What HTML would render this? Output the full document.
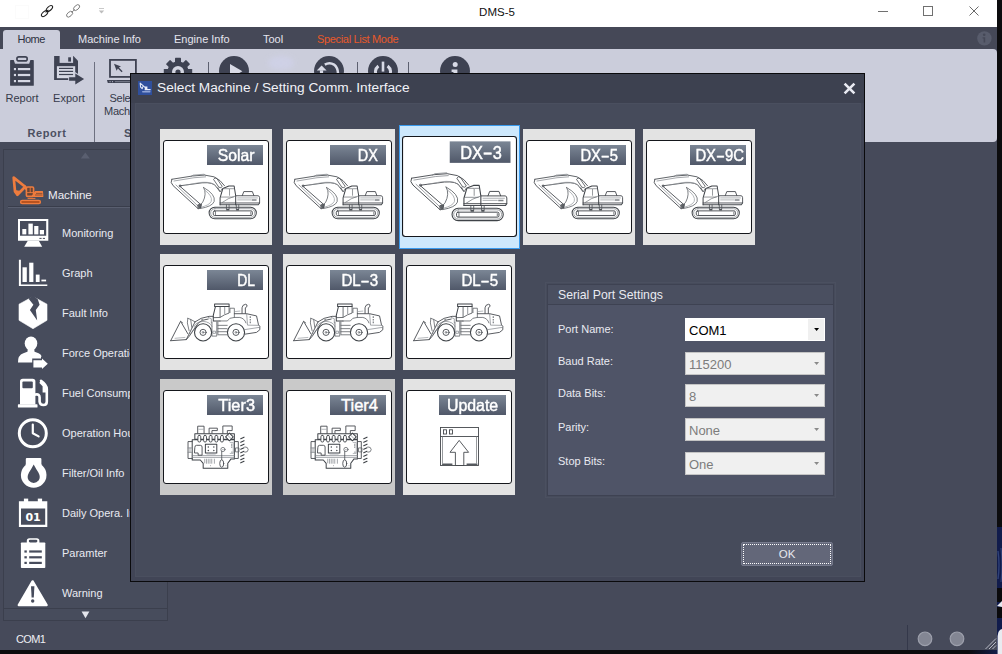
<!DOCTYPE html>
<html>
<head>
<meta charset="utf-8">
<title>DMS-5</title>
<style>
*{box-sizing:border-box;margin:0;padding:0}
html,body{width:1002px;height:654px;overflow:hidden;background:#0b0b0d}
body{font-family:"Liberation Sans",sans-serif;font-size:11px;color:#e8e9f0;position:relative}
.abs{position:absolute}
svg{display:block}
#win{position:absolute;left:0;top:0;width:997px;height:650px;background:#464a5a;overflow:hidden}
#titlebar{position:absolute;left:0;top:0;width:997px;height:27px;background:#fff}
#title{position:absolute;left:0;width:994px;top:5px;text-align:center;color:#111;font-size:11.5px;line-height:14px}
#tabrow{position:absolute;left:0;top:27px;width:997px;height:22px;background:#454857}
.tab{position:absolute;top:6px;font-size:11px;line-height:13px;color:#e4e5ee;white-space:nowrap}
#hometab{position:absolute;left:3px;top:3px;width:57px;height:20px;background:#cbcddb;border-radius:3px 3px 0 0}
#ribbon{position:absolute;left:0;top:49px;width:997px;height:93px;background:#cbcddb;border-radius:0 4px 4px 0}
.rlabel{position:absolute;color:#363a4a;font-size:11px;line-height:13px;text-align:center;white-space:nowrap}
.rsep{position:absolute;width:1px;background:#6d7080}
#side{position:absolute;left:3px;top:149px;width:165px;height:472px;background:#474c5c;border:1px solid #3b3f4d}
.sitem{position:absolute;left:57px;font-size:11px;line-height:13px;color:#e9eaf1;white-space:nowrap}
.sicon{position:absolute;left:0;top:0}
#dlg{position:absolute;left:130px;top:73px;width:735px;height:509px;background:linear-gradient(#3d4150 0,#3d4150 29px,#414556 29px);border:1px solid #0a0a0c}
#dlgbody{position:absolute;left:135px;top:103px;width:726px;height:474px;background:#464b5b;border:1px solid #4a4f5f}
#dlgtitle{position:absolute;left:157px;top:80px;font-size:13.7px;line-height:16px;color:#f1f2f8;white-space:nowrap}
.tile{position:absolute;width:112px;height:116px;background:#e3e3e3}
.tile.dk{background:#c9c9c9}
.tile .in{position:absolute;left:3px;top:11px;width:106px;height:94px;background:#fff;border:1px solid #15171c;border-radius:3px;overflow:hidden}
.tile.sel{width:121px;height:124px;background:#cde8fc;border:1px solid #3a9bee}
.tile.sel .in{left:2px;top:10px;transform-origin:0 0;transform:scale(1.085,1.0745)}
.tile .lb{position:absolute;right:5px;top:4px;width:56px;height:20px;background:linear-gradient(#7b8695,#505869);color:#fff;font-weight:normal;-webkit-text-stroke:0.45px #fff;font-size:16.5px;line-height:21px;text-align:right;padding-right:8px;white-space:nowrap}
.tile .lb span{display:inline-block;transform-origin:100% 50%;transform:scaleX(.88)}
.tile svg{position:absolute;left:-1px;top:-1px}
.tile .lb span.hy{display:inline-block;transform-origin:50% 50%;transform:scaleX(1.8);margin:0 2.2px}
#panel{position:absolute;left:547px;top:284px;width:287px;height:212px;background:#4f5467;border:1px solid #3e4252;outline:1px solid #4b5060;outline-offset:1px}
#panelhd{position:absolute;left:0;top:0;width:285px;height:20px;background:#4a4f60;border-bottom:1px solid #3e4252}
.plabel{position:absolute;left:558px;font-size:11px;line-height:13px;color:#e9eaf1;white-space:nowrap}
.combo{position:absolute;left:685px;width:140px;height:23px;background:#f0f0f0;border:1px solid #c4c4c4;color:#7c7c7c;font-size:13px;line-height:23px;padding-left:3px}
.combo.on{background:#fff;border-color:#fff;color:#000}
.combo i{position:absolute;right:4.7px;top:8.7px;width:5.4px;height:3.2px;background:#8a8a8a;clip-path:polygon(0 0,100% 0,50% 100%)}
.combo.on b{position:absolute;right:0;top:0;width:16px;height:21px;background:#f0f0f0}
.combo.on i{background:#000}
#ok{position:absolute;left:741px;top:542px;width:92px;height:24px;background:#636779;border:1px solid #777b8d;border-radius:2px;color:#e6e7ee;font-size:11.5px;line-height:22px;text-align:center}
#ok:after{content:"";position:absolute;left:1px;top:1px;right:1px;bottom:1px;border:1px dotted #fff}
</style>
</head>
<body>
<div id="win">
  <div id="titlebar"><div id="title">DMS-5</div>
  <svg class="abs" style="left:0;top:0" width="997" height="27" viewBox="0 0 997 27" fill="none">
<rect x="15.5" y="5.5" width="13" height="13" stroke="#fbfbfb"/>
<g stroke="#1c1c1c" stroke-width="1.05">
<ellipse cx="44.4" cy="13.6" rx="3.8" ry="2" transform="rotate(-42 44.6 13.4)"/>
<ellipse cx="49.6" cy="8.6" rx="3.8" ry="2" transform="rotate(-42 49.4 8.8)"/>
<path d="M45.6,12.4 L48.4,9.8"/>
</g>
<g stroke="#7a7a7a" stroke-width="0.9">
<ellipse cx="69.6" cy="14.2" rx="3.6" ry="2.1" transform="rotate(-42 69.6 14.2)"/>
<ellipse cx="76.6" cy="7.6" rx="3.6" ry="2.1" transform="rotate(-42 76.6 7.6)"/>
<path d="M71.6,12.4 L74.6,9.6"/>
</g>
<path d="M99,8.5 L104,8.5" stroke="#c9c9c9"/>
<path d="M98.8,10.5 L104.2,10.5 L101.5,13.5 Z" fill="#bdbdbd"/>
<path d="M878,11.5 L888,11.5" stroke="#707070"/>
<rect x="923.5" y="6.5" width="9" height="9" stroke="#707070"/>
<path d="M969.5,6.5 L978.5,15.5 M978.5,6.5 L969.5,15.5" stroke="#6a6a6a" stroke-width="1"/>
</svg>
  </div>
  <div id="tabrow">
    <div id="hometab"></div>
    <div class="tab" style="left:17.5px;color:#2c3040;letter-spacing:-0.5px">Home</div>
    <div class="tab" style="left:78px">Machine Info</div>
    <div class="tab" style="left:174px">Engine Info</div>
    <div class="tab" style="left:263px">Tool</div>
    <div class="tab" style="left:317px;color:#e8592a;letter-spacing:-0.33px">Special List Mode</div>
    <svg class="abs" style="left:976px;top:3px" width="17" height="17" viewBox="0 0 17 17"><circle cx="8.4" cy="8.4" r="7.2" fill="#585c6c"/><circle cx="8.2" cy="4.8" r="1.3" fill="#454857"/><path d="M6.6,7.2 L9.2,7.2 L9.2,12.4 L7.6,12.4 L7.6,8.4 L6.6,8.4 Z" fill="#454857"/></svg>
  </div>
  <div id="ribbon"></div>
  <div class="abs" style="left:0;top:49px"><svg width="500" height="93" viewBox="0 49 500 93" fill="none">
<rect x="10.1" y="60.1" width="23.7" height="25.7" rx="0.6" fill="#3e4252"/>
<path d="M13.6,59.6 L30.5,59.6 L29.2,63.8 L15,63.8 Z" fill="#cbcddb"/>
<rect x="16.1" y="56.1" width="11.9" height="5.6" rx="2.8" fill="#3e4252"/>
<rect x="17.7" y="57.7" width="8.7" height="2.4" rx="1.2" fill="#cbcddb"/>
<g fill="#d6d8e4">
<rect x="13.9" y="68" width="2.1" height="2.2"/><rect x="17.9" y="68" width="12.3" height="2.2"/>
<rect x="13.9" y="73.9" width="2.1" height="2.2"/><rect x="17.9" y="73.9" width="12.3" height="2.2"/>
<rect x="13.9" y="80" width="2.1" height="2.2"/><rect x="17.9" y="80" width="12.3" height="2.2"/>
</g>
<path d="M54.1,56.1 L73.4,56.1 L78,60.7 L78,80 L54.1,80 Z" fill="#3e4252"/>
<rect x="59.6" y="55.6" width="13.5" height="7.3" fill="#cbcddb"/>
<rect x="68.2" y="57.3" width="2.8" height="4.3" fill="#3e4252"/>
<rect x="56.9" y="66.2" width="18.3" height="12" fill="#d6d8e4"/>
<g fill="#3e4252">
<rect x="59" y="67.8" width="14.1" height="1.2"/>
<rect x="59" y="70.8" width="14.1" height="1.2"/>
<rect x="59" y="73.9" width="14.1" height="1.2"/>
</g>
<path d="M68.2,76.2 L74.2,76.2 L74.2,71.6 L86,79 L74.2,86.4 L74.2,81.6 L68.2,81.6 Z" fill="#cbcddb"/>
<path d="M69.1,77.2 L75.3,77.2 L75.3,73.6 L84.1,79 L75.3,84.4 L75.3,80.7 L69.1,80.7 Z" fill="#3e4252"/>
<rect x="110" y="59.9" width="25.9" height="17" stroke="#3e4252" stroke-width="1.8"/>
<path d="M107,80 L139.4,80 L138.6,82.9 L107.8,82.9 Z" fill="#3e4252"/>
<path d="M109.6,81.7 L110.6,81.7 M112,81.7 L113,81.7" stroke="#cbcddb" stroke-width="0.9"/>
<path d="M115,81.7 L130.6,81.7" stroke="#9a9dac" stroke-width="0.7"/>
<path d="M114,63.8 L121,66.4 L118.9,67.6 L122.6,71.2 L121.6,72.2 L117.9,68.6 L116.6,70.8 Z" fill="#3e4252"/>
<g transform="translate(178,72)" fill="#3e4252">
<circle r="10.6"/>
<g>
<rect x="-3" y="-14.2" width="6" height="28.4" rx="0.6"/>
<rect x="-3" y="-14.2" width="6" height="28.4" rx="0.6" transform="rotate(45)"/>
<rect x="-3" y="-14.2" width="6" height="28.4" rx="0.6" transform="rotate(90)"/>
<rect x="-3" y="-14.2" width="6" height="28.4" rx="0.6" transform="rotate(135)"/>
</g>
<circle r="6" fill="#d4d6e2"/>
<circle r="2.6"/>
</g>
<g fill="#5d6070">
<rect x="208" y="62" width="1" height="20"/>
<rect x="357" y="62" width="1" height="20"/>
<rect x="408" y="62" width="1" height="20"/>
</g>
<circle cx="234" cy="71" r="15" fill="#3e4252"/>
<path d="M230,64 L242.4,71.2 L230,78.4 Z" fill="#d8dae6"/>
<ellipse cx="281" cy="63" rx="13" ry="7" fill="#d2d4ef" opacity="0.55" filter="url(#bl)"/>
<filter id="bl" x="-50%" y="-50%" width="200%" height="200%"><feGaussianBlur stdDeviation="2.5"/></filter>
<circle cx="329" cy="71" r="15" fill="#3e4252"/>
<path d="M324.8,64.6 Q329.6,61.8 334,64.6 Q337.8,67.6 338,73.4" stroke="#d8dae6" stroke-width="2.5"/>
<path d="M316.8,70.5 L321.6,65.4 L326.6,70.5 Z" fill="#d8dae6"/>
<rect x="319.9" y="70.3" width="3.2" height="3" fill="#d8dae6"/>
<circle cx="383" cy="71" r="15" fill="#3e4252"/>
<path d="M378.4,66 A7.6,7.6 0 1 0 387.6,66" stroke="#d8dae6" stroke-width="3"/>
<path d="M383,61.6 L383,71.6" stroke="#d8dae6" stroke-width="2.6"/>
<circle cx="455" cy="71" r="15" fill="#3e4252"/>
<circle cx="455.2" cy="64.4" r="2.5" fill="#d8dae6"/>
<path d="M451.6,69.6 L457.4,69.6 L457.4,79 L453.4,79 L453.4,72 L451.6,72 Z" fill="#d8dae6"/>
</svg></div>
  <div class="rlabel" style="left:2px;width:40px;top:92px">Report</div>
  <div class="rlabel" style="left:49px;width:40px;top:92px">Export</div>
  <div class="rlabel" style="left:99px;width:50px;top:92px;letter-spacing:-0.25px">Select<br>Machine</div>
  <div class="rlabel" style="left:22px;width:50px;top:127px;font-weight:bold;color:#4c5062;letter-spacing:0.6px">Report</div>
  <div class="rlabel" style="left:124px;width:20px;top:127px;font-weight:bold;color:#4c5062;text-align:left">S</div>
  <div class="rsep" style="left:94px;top:62px;height:80px"></div>
  <div id="side"><div class="abs" style="left:1px;top:0;width:162px;height:470px">
    <div class="abs" style="left:-1px;top:458px;width:163px;height:12px;border-top:1px solid #3b3f4d;background:#474c5c"></div>
    <div class="sicon"><svg width="162" height="470" viewBox="5 150 162 470" fill="none">
<path d="M80.8,158.6 L85.3,152.6 L89.8,158.6 Z" fill="#5a5f70"/>
<g stroke="#ee7c3e" stroke-linejoin="round" stroke-linecap="round">
<path d="M13.7,177.6 L25.2,186.8 L17.4,194.8 L15,191.4 Z" stroke-width="2.7"/>
<path d="M15,190.6 L20.4,191.4 L17.4,195 Z" stroke-width="1" fill="#ee7c3e"/>
<path d="M25.2,186.6 L26,189" stroke-width="2"/>
<rect x="26.4" y="187" width="7.2" height="9.4" rx="1.2" stroke-width="1.6" fill="#6a4434"/>
<path d="M30.2,187.6 L30.2,192.6 M27,192.6 L33,192.6" stroke-width="0.9"/>
<path d="M32.2,196.4 L35.4,191.6 L42.4,191.6 L42.8,196.4 Z" stroke-width="1.2" fill="#ee7c3e"/>
<path d="M36.4,193.4 L42,193.4 M35.4,195 L42,195" stroke="#6a4434" stroke-width="0.7"/>
<path d="M28,198.4 L35,198.4" stroke-width="1"/>
<rect x="20.6" y="200.4" width="19.8" height="3.2" rx="1.6" stroke-width="1.4" fill="#b9531f"/>
</g>
<g fill="#fff">
<path d="M18,219 L48.3,219 L48.3,240.8 L18,240.8 Z M20,221 L20,235.8 L46.2,235.8 L46.2,221 Z" fill-rule="evenodd"/>
<rect x="22.3" y="229" width="4" height="5.4"/>
<rect x="28.4" y="223.6" width="4.4" height="10.8"/>
<rect x="34.2" y="226" width="4.2" height="8.4"/>
<rect x="39.8" y="230" width="4.2" height="4.4"/>
<path d="M27.8,240.8 L38.8,240.8 L42.2,246.8 L24.2,246.8 Z"/>
</g>
<path d="M39.4,238.4 L41.6,238.4 M42.8,238.4 L45,238.4" stroke="#474c5c" stroke-width="1"/>
<g fill="#fff">
<path d="M18.9,259.7 L20.9,259.7 L20.9,284.4 L47.3,284.4 L47.3,286.1 L18.9,286.1 Z"/>
<rect x="22.5" y="267.3" width="4.3" height="14.7"/>
<rect x="29.2" y="262.7" width="4.2" height="19.3"/>
<rect x="35.8" y="274.6" width="3.8" height="7.4"/>
<rect x="41.4" y="279.6" width="4.7" height="1.8"/>
</g>
<path d="M33,296.6 L47,304.2 L47,320.3 L33,328.7 L19,320.3 L19,304.2 Z" fill="#fff" stroke="#fff" stroke-width="0.6" stroke-linejoin="round"/>
<path d="M28.6,298.8 L33.4,304.8 L29.9,309.9 L37.2,320.6 L35.8,309.9 L39.6,304.8 L37.9,299.4 L33,295 Z" fill="#474c5c"/>
<g fill="#fff">
<ellipse cx="31" cy="343.4" rx="6.3" ry="6.9"/>
<rect x="27.6" y="347" width="6.8" height="7"/>
<path d="M18,362.6 Q17.6,355.2 23.4,353.2 L28,351.4 Q31,353.6 34,351.4 L38.6,353.2 Q43,355 42.6,362.6 Z"/>
</g>
<path d="M32.2,358.6 L41,358.6 L41,356 L49.6,363.8 L41,371.6 L41,369 L32.2,369 Z" fill="#474c5c"/>
<path d="M33.4,360.2 L42,360.2 L42,358.6 L47.8,363.8 L42,369 L42,367.6 L33.4,367.6 Z" fill="#fff"/>
<g fill="#fff">
<path d="M20,381.6 Q20,378.8 22.8,378.8 L32.6,378.8 Q35.4,378.8 35.4,381.6 L35.4,404.5 L20,404.5 Z"/>
<rect x="17.9" y="404.3" width="19.6" height="3.2" rx="0.6"/>
</g>
<rect x="22.4" y="381.4" width="10.4" height="6.8" rx="1" fill="#474c5c"/>
<path d="M35.4,394.6 Q39.6,393.6 39.6,397.4 L39.6,401.6 Q40,405 43.4,405 Q46.8,405 46.8,401.4 L46.8,389 Q46.6,384.8 41,380.8" stroke="#fff" stroke-width="2.6" stroke-linecap="round"/>
<path d="M40.6,380.6 L46.4,386.4 L46.4,392.6 L42.6,392.6 L42.6,386.2 L39.4,383 Z" fill="#fff"/>
<circle cx="32.8" cy="433.3" r="13.5" stroke="#fff" stroke-width="3"/>
<path d="M32.8,424.6 L32.8,433.3 L38.6,436.4" stroke="#fff" stroke-width="2.2" stroke-linecap="round" stroke-linejoin="round"/>
<g fill="#fff">
<rect x="25.8" y="457.9" width="15.6" height="8" rx="1"/>
<circle cx="33.7" cy="475" r="12.8"/>
</g>
<path d="M33.7,464.6 Q36,469 38.4,472.6 Q41,477.4 38.6,480.6 Q36.6,483 33.7,483 Q30.8,483 28.8,480.6 Q26.4,477.4 29,472.6 Q31.4,469 33.7,464.6 Z" fill="#474c5c"/>
<g fill="#fff">
<path d="M18.9,501.3 L47.3,501.3 L47.3,526.9 L18.9,526.9 Z M21,508.6 L21,524.8 L45.2,524.8 L45.2,508.6 Z" fill-rule="evenodd"/>
<rect x="23.9" y="498.6" width="4.3" height="4"/>
<rect x="37.8" y="498.6" width="4.3" height="4"/>
</g>
<text x="33.1" y="521.4" style="font-family:'DejaVu Sans','Liberation Sans',sans-serif;font-weight:bold;font-size:11px" fill="#fff" text-anchor="middle">01</text>
<g fill="#fff">
<rect x="20.9" y="542.4" width="24.4" height="25.6" rx="0.8"/>
<rect x="26.8" y="538.2" width="12.6" height="6.6" rx="2.6"/>
</g>
<rect x="28.8" y="539.8" width="8.6" height="2.6" rx="1.3" fill="#474c5c"/>
<g fill="#474c5c">
<rect x="24.4" y="550.4" width="2.4" height="2.2"/><rect x="29.2" y="550.4" width="12.6" height="2.2"/>
<rect x="24.4" y="556.2" width="2.4" height="2.2"/><rect x="29.2" y="556.2" width="12.6" height="2.2"/>
<rect x="24.4" y="561.8" width="2.4" height="2.2"/><rect x="29.2" y="561.8" width="12.6" height="2.2"/>
</g>
<path d="M32.6,581.4 L46.6,605 L18.8,605 Z" fill="#fff" stroke="#fff" stroke-width="2.4" stroke-linejoin="round"/>
<path d="M31,586.2 L34.4,586.2 L33.8,597.6 L31.6,597.6 Z" fill="#474c5c"/>
<circle cx="32.7" cy="601" r="1.7" fill="#474c5c"/>
<path d="M81.6,611.4 L89.4,611.4 L85.5,618.2 Z" fill="#e4e5ec"/>
</svg></div>
    <div class="abs" style="left:43px;top:37px;font-size:11.6px;line-height:15px;color:#eeeef4">Machine</div>
    <div class="abs" style="left:3px;top:56px;width:159px;height:2px;background:#595e6f;border-top:1px solid #393d4b"></div>
    <div class="sitem" style="top:77px">Monitoring</div>
    <div class="sitem" style="top:117px">Graph</div>
    <div class="sitem" style="top:157px">Fault Info</div>
    <div class="sitem" style="top:197px">Force Operation</div>
    <div class="sitem" style="top:237px">Fuel Consumption</div>
    <div class="sitem" style="top:277px">Operation Hour</div>
    <div class="sitem" style="top:317px">Filter/Oil Info</div>
    <div class="sitem" style="top:357px">Daily Opera. Info</div>
    <div class="sitem" style="top:397px">Paramter</div>
    <div class="sitem" style="top:437px">Warning</div>
  </div></div>
  <div class="abs" style="left:16px;top:633px;font-size:11px;line-height:13px;color:#eeeef4;letter-spacing:-0.6px">COM1</div>
  <div class="abs" style="left:900px;top:620px"><svg width="97" height="30" viewBox="900 620 97 30" fill="none">
<rect x="907" y="625" width="1" height="25" fill="#34384a"/>
<circle cx="925" cy="638.8" r="6.8" fill="#838693" stroke="#9da0ac" stroke-width="1.2"/>
<circle cx="957" cy="638.8" r="6.8" fill="#838693" stroke="#9da0ac" stroke-width="1.2"/>
<path d="M985.5,649 L996,638.5 M989,649 L996,642 M992.5,649 L996,645.5" stroke="#b9bbc6" stroke-width="1"/>
</svg></div>
</div>
<div class="abs" style="left:997px;top:0"><svg width="5" height="654" viewBox="997 0 5 654" fill="none">
<rect x="997" y="0" width="5" height="654" fill="#0c0c0e"/>
<rect x="997" y="527" width="5" height="127" fill="#111c4c"/>
<path d="M998,551 Q1000,565 998,579" stroke="#2f4178" stroke-width="1.4"/>
<path d="M1001,548 Q1003,565 1001,582" stroke="#2f4178" stroke-width="1.2"/>
<rect x="997" y="588" width="5" height="14" fill="#0a0a0c"/>
<path d="M997,606 L1002,601 L1002,607 Z" fill="#e6e8ee"/>
<rect x="997" y="607" width="5" height="11" fill="#0a0a0c"/>
<path d="M997.6,654 L997.6,636 Q998,630 1002,629 L1002,654 Z" fill="#e9ebf0"/>
</svg></div>
<div class="abs" style="left:968px;top:650px;width:29px;height:4px;background:linear-gradient(90deg,#0b0b0d,#121d48)"></div>
<div id="dlg"></div>
<div id="dlgbody"></div>
<div class="abs" style="left:138px;top:81px"><svg width="14" height="14" viewBox="0 0 14 14" fill="none">
<rect width="14" height="14" fill="#2f4f9c"/>
<path d="M2.2,2.2 L7,6.4 M2.2,2.2 L2.6,6 L4.2,7.6 L5,5.4" stroke="#dfe6f6" stroke-width="1.1" stroke-linecap="round" stroke-linejoin="round"/>
<path d="M7,5.4 L9.4,5.4 L9.4,8 L12.6,8 L12.6,9.2 L6.6,9.2 Z" fill="#e8ecf8"/>
<path d="M4.8,10.8 L11.8,10.8" stroke="#8fa3d6" stroke-width="1.6" stroke-linecap="round"/>
</svg></div>
<div id="dlgtitle">Select Machine / Setting Comm. Interface</div>
<div class="abs" style="left:843px;top:82px"><svg width="13" height="13" viewBox="0 0 13 13" fill="none">
<path d="M1.6,1.6 L11.4,11.4 M11.4,1.6 L1.6,11.4" stroke="#e9eaf2" stroke-width="2.6" stroke-linecap="butt"/>
</svg></div>
<div class="tile" style="left:160px;top:129px"><div class="in"><svg width="106" height="94" viewBox="0 0 106 94" fill="none" stroke="#4f5358" stroke-linecap="round" stroke-linejoin="round">
<g transform="translate(0,25) scale(0.10978)" stroke-width="8.2">
<rect x="420" y="385" width="430" height="105" rx="52" stroke="#3f4348" stroke-width="9.2"/>
<rect x="434" y="398" width="402" height="79" rx="39" stroke="#7b7f84" stroke-width="6.2"/>
<rect x="458" y="418" width="356" height="42" rx="12" stroke="#3f4348" stroke-width="8.2"/>
<path d="M478,422 L478,456 M800,430 L800,450" stroke="#5c6065" stroke-width="7.2"/>
<path d="M578,364 L578,400 M602,364 L602,400 M668,364 L668,400 M690,364 L690,400" stroke-width="7.2"/>
<path d="M576,400 L604,400 L604,414 L576,414 Z M666,400 L692,400 L692,414 L666,414 Z" fill="#4f5358" stroke="none"/>
<path d="M662,280 L866,280 Q880,282 880,298 L880,346 L520,346" stroke="#474b50"/>
<path d="M520,362 L868,362 L880,346" stroke="#474b50" stroke-width="9.2"/>
<path d="M680,300 L860,300 M680,318 L800,318" stroke="#9da1a6" stroke-width="7.2"/>
<path d="M808,312 L852,312 L852,326 L808,326 Z" fill="#7f8388" stroke="none"/>
<path d="M722,279 L736,242 L814,242 L828,279" stroke="#474b50"/>
<path d="M520,362 L520,300 L545,214 L600,191 L648,191 L662,280 L662,362" stroke="#3f4348" stroke-width="9.2"/>
<path d="M547,216 L606,216 L606,276 M612,216 L646,216 M528,292 L640,292" stroke="#696d72" stroke-width="6.2"/>
<path d="M538,342 Q590,302 660,282" stroke="#696d72" stroke-width="6.2"/>
<path d="M80,130 L270,100 L380,92 L465,108 Q525,135 560,188" />
<path d="M100,146 L282,116 L388,108" stroke="#7b7f84" stroke-width="6.2"/>
<path d="M255,104 L275,92 L375,84 L385,92" stroke="#7b7f84" stroke-width="6.2"/>
<path d="M150,190 L300,170 Q420,148 470,180 L516,238" />
<path d="M215,182 L330,160 Q420,148 462,176" stroke="#94989d" stroke-width="5.2"/>
<path d="M462,128 Q474,108 490,122 L540,196 Q530,214 512,204 Z" stroke="#474b50" stroke-width="7.2"/>
<path d="M500,206 L520,246 L540,214" stroke="#5c6065" stroke-width="7.2"/>
<path d="M80,130 Q62,160 92,188 L318,396" stroke="#474b50"/>
<path d="M150,190 L346,362" stroke="#474b50"/>
<path d="M118,182 L330,384" stroke="#7b7f84" stroke-width="6.2"/>
<circle cx="156" cy="190" r="9" stroke-width="6.2"/>
<path d="M320,362 L350,356 L346,392 L322,398 Z" fill="#5c6065" stroke="#3f4348" stroke-width="6.2"/>
<path d="M370,205 Q482,268 466,332 Q450,378 342,396" stroke="#5c6065" stroke-width="7.2"/>
<path d="M384,232 Q452,282 440,330 Q424,366 350,384" stroke="#94989d" stroke-width="6.2"/>
<path d="M370,205 Q402,262 362,338 L340,364" stroke="#5c6065" stroke-width="7.2"/>
</g>
</svg><div class="lb" style="width:56px;padding-right:8px"><span style="transform:scaleX(0.956)">Solar</span></div></div></div>
<div class="tile" style="left:283px;top:129px"><div class="in"><svg width="106" height="94" viewBox="0 0 106 94" fill="none" stroke="#4f5358" stroke-linecap="round" stroke-linejoin="round">
<g transform="translate(0,25) scale(0.10978)" stroke-width="8.2">
<rect x="420" y="385" width="430" height="105" rx="52" stroke="#3f4348" stroke-width="9.2"/>
<rect x="434" y="398" width="402" height="79" rx="39" stroke="#7b7f84" stroke-width="6.2"/>
<rect x="458" y="418" width="356" height="42" rx="12" stroke="#3f4348" stroke-width="8.2"/>
<path d="M478,422 L478,456 M800,430 L800,450" stroke="#5c6065" stroke-width="7.2"/>
<path d="M578,364 L578,400 M602,364 L602,400 M668,364 L668,400 M690,364 L690,400" stroke-width="7.2"/>
<path d="M576,400 L604,400 L604,414 L576,414 Z M666,400 L692,400 L692,414 L666,414 Z" fill="#4f5358" stroke="none"/>
<path d="M662,280 L866,280 Q880,282 880,298 L880,346 L520,346" stroke="#474b50"/>
<path d="M520,362 L868,362 L880,346" stroke="#474b50" stroke-width="9.2"/>
<path d="M680,300 L860,300 M680,318 L800,318" stroke="#9da1a6" stroke-width="7.2"/>
<path d="M808,312 L852,312 L852,326 L808,326 Z" fill="#7f8388" stroke="none"/>
<path d="M722,279 L736,242 L814,242 L828,279" stroke="#474b50"/>
<path d="M520,362 L520,300 L545,214 L600,191 L648,191 L662,280 L662,362" stroke="#3f4348" stroke-width="9.2"/>
<path d="M547,216 L606,216 L606,276 M612,216 L646,216 M528,292 L640,292" stroke="#696d72" stroke-width="6.2"/>
<path d="M538,342 Q590,302 660,282" stroke="#696d72" stroke-width="6.2"/>
<path d="M80,130 L270,100 L380,92 L465,108 Q525,135 560,188" />
<path d="M100,146 L282,116 L388,108" stroke="#7b7f84" stroke-width="6.2"/>
<path d="M255,104 L275,92 L375,84 L385,92" stroke="#7b7f84" stroke-width="6.2"/>
<path d="M150,190 L300,170 Q420,148 470,180 L516,238" />
<path d="M215,182 L330,160 Q420,148 462,176" stroke="#94989d" stroke-width="5.2"/>
<path d="M462,128 Q474,108 490,122 L540,196 Q530,214 512,204 Z" stroke="#474b50" stroke-width="7.2"/>
<path d="M500,206 L520,246 L540,214" stroke="#5c6065" stroke-width="7.2"/>
<path d="M80,130 Q62,160 92,188 L318,396" stroke="#474b50"/>
<path d="M150,190 L346,362" stroke="#474b50"/>
<path d="M118,182 L330,384" stroke="#7b7f84" stroke-width="6.2"/>
<circle cx="156" cy="190" r="9" stroke-width="6.2"/>
<path d="M320,362 L350,356 L346,392 L322,398 Z" fill="#5c6065" stroke="#3f4348" stroke-width="6.2"/>
<path d="M370,205 Q482,268 466,332 Q450,378 342,396" stroke="#5c6065" stroke-width="7.2"/>
<path d="M384,232 Q452,282 440,330 Q424,366 350,384" stroke="#94989d" stroke-width="6.2"/>
<path d="M370,205 Q402,262 362,338 L340,364" stroke="#5c6065" stroke-width="7.2"/>
</g>
</svg><div class="lb" style="width:56px;padding-right:8px"><span style="transform:scaleX(0.875)">DX</span></div></div></div>
<div class="tile" style="left:523px;top:129px"><div class="in"><svg width="106" height="94" viewBox="0 0 106 94" fill="none" stroke="#4f5358" stroke-linecap="round" stroke-linejoin="round">
<g transform="translate(0,25) scale(0.10978)" stroke-width="8.2">
<rect x="420" y="385" width="430" height="105" rx="52" stroke="#3f4348" stroke-width="9.2"/>
<rect x="434" y="398" width="402" height="79" rx="39" stroke="#7b7f84" stroke-width="6.2"/>
<rect x="458" y="418" width="356" height="42" rx="12" stroke="#3f4348" stroke-width="8.2"/>
<path d="M478,422 L478,456 M800,430 L800,450" stroke="#5c6065" stroke-width="7.2"/>
<path d="M578,364 L578,400 M602,364 L602,400 M668,364 L668,400 M690,364 L690,400" stroke-width="7.2"/>
<path d="M576,400 L604,400 L604,414 L576,414 Z M666,400 L692,400 L692,414 L666,414 Z" fill="#4f5358" stroke="none"/>
<path d="M662,280 L866,280 Q880,282 880,298 L880,346 L520,346" stroke="#474b50"/>
<path d="M520,362 L868,362 L880,346" stroke="#474b50" stroke-width="9.2"/>
<path d="M680,300 L860,300 M680,318 L800,318" stroke="#9da1a6" stroke-width="7.2"/>
<path d="M808,312 L852,312 L852,326 L808,326 Z" fill="#7f8388" stroke="none"/>
<path d="M722,279 L736,242 L814,242 L828,279" stroke="#474b50"/>
<path d="M520,362 L520,300 L545,214 L600,191 L648,191 L662,280 L662,362" stroke="#3f4348" stroke-width="9.2"/>
<path d="M547,216 L606,216 L606,276 M612,216 L646,216 M528,292 L640,292" stroke="#696d72" stroke-width="6.2"/>
<path d="M538,342 Q590,302 660,282" stroke="#696d72" stroke-width="6.2"/>
<path d="M80,130 L270,100 L380,92 L465,108 Q525,135 560,188" />
<path d="M100,146 L282,116 L388,108" stroke="#7b7f84" stroke-width="6.2"/>
<path d="M255,104 L275,92 L375,84 L385,92" stroke="#7b7f84" stroke-width="6.2"/>
<path d="M150,190 L300,170 Q420,148 470,180 L516,238" />
<path d="M215,182 L330,160 Q420,148 462,176" stroke="#94989d" stroke-width="5.2"/>
<path d="M462,128 Q474,108 490,122 L540,196 Q530,214 512,204 Z" stroke="#474b50" stroke-width="7.2"/>
<path d="M500,206 L520,246 L540,214" stroke="#5c6065" stroke-width="7.2"/>
<path d="M80,130 Q62,160 92,188 L318,396" stroke="#474b50"/>
<path d="M150,190 L346,362" stroke="#474b50"/>
<path d="M118,182 L330,384" stroke="#7b7f84" stroke-width="6.2"/>
<circle cx="156" cy="190" r="9" stroke-width="6.2"/>
<path d="M320,362 L350,356 L346,392 L322,398 Z" fill="#5c6065" stroke="#3f4348" stroke-width="6.2"/>
<path d="M370,205 Q482,268 466,332 Q450,378 342,396" stroke="#5c6065" stroke-width="7.2"/>
<path d="M384,232 Q452,282 440,330 Q424,366 350,384" stroke="#94989d" stroke-width="6.2"/>
<path d="M370,205 Q402,262 362,338 L340,364" stroke="#5c6065" stroke-width="7.2"/>
</g>
</svg><div class="lb" style="width:56px;padding-right:8px"><span style="transform:scaleX(0.895)">DX<span class="hy">-</span>5</span></div></div></div>
<div class="tile" style="left:643px;top:129px"><div class="in"><svg width="106" height="94" viewBox="0 0 106 94" fill="none" stroke="#4f5358" stroke-linecap="round" stroke-linejoin="round">
<g transform="translate(0,25) scale(0.10978)" stroke-width="8.2">
<rect x="420" y="385" width="430" height="105" rx="52" stroke="#3f4348" stroke-width="9.2"/>
<rect x="434" y="398" width="402" height="79" rx="39" stroke="#7b7f84" stroke-width="6.2"/>
<rect x="458" y="418" width="356" height="42" rx="12" stroke="#3f4348" stroke-width="8.2"/>
<path d="M478,422 L478,456 M800,430 L800,450" stroke="#5c6065" stroke-width="7.2"/>
<path d="M578,364 L578,400 M602,364 L602,400 M668,364 L668,400 M690,364 L690,400" stroke-width="7.2"/>
<path d="M576,400 L604,400 L604,414 L576,414 Z M666,400 L692,400 L692,414 L666,414 Z" fill="#4f5358" stroke="none"/>
<path d="M662,280 L866,280 Q880,282 880,298 L880,346 L520,346" stroke="#474b50"/>
<path d="M520,362 L868,362 L880,346" stroke="#474b50" stroke-width="9.2"/>
<path d="M680,300 L860,300 M680,318 L800,318" stroke="#9da1a6" stroke-width="7.2"/>
<path d="M808,312 L852,312 L852,326 L808,326 Z" fill="#7f8388" stroke="none"/>
<path d="M722,279 L736,242 L814,242 L828,279" stroke="#474b50"/>
<path d="M520,362 L520,300 L545,214 L600,191 L648,191 L662,280 L662,362" stroke="#3f4348" stroke-width="9.2"/>
<path d="M547,216 L606,216 L606,276 M612,216 L646,216 M528,292 L640,292" stroke="#696d72" stroke-width="6.2"/>
<path d="M538,342 Q590,302 660,282" stroke="#696d72" stroke-width="6.2"/>
<path d="M80,130 L270,100 L380,92 L465,108 Q525,135 560,188" />
<path d="M100,146 L282,116 L388,108" stroke="#7b7f84" stroke-width="6.2"/>
<path d="M255,104 L275,92 L375,84 L385,92" stroke="#7b7f84" stroke-width="6.2"/>
<path d="M150,190 L300,170 Q420,148 470,180 L516,238" />
<path d="M215,182 L330,160 Q420,148 462,176" stroke="#94989d" stroke-width="5.2"/>
<path d="M462,128 Q474,108 490,122 L540,196 Q530,214 512,204 Z" stroke="#474b50" stroke-width="7.2"/>
<path d="M500,206 L520,246 L540,214" stroke="#5c6065" stroke-width="7.2"/>
<path d="M80,130 Q62,160 92,188 L318,396" stroke="#474b50"/>
<path d="M150,190 L346,362" stroke="#474b50"/>
<path d="M118,182 L330,384" stroke="#7b7f84" stroke-width="6.2"/>
<circle cx="156" cy="190" r="9" stroke-width="6.2"/>
<path d="M320,362 L350,356 L346,392 L322,398 Z" fill="#5c6065" stroke="#3f4348" stroke-width="6.2"/>
<path d="M370,205 Q482,268 466,332 Q450,378 342,396" stroke="#5c6065" stroke-width="7.2"/>
<path d="M384,232 Q452,282 440,330 Q424,366 350,384" stroke="#94989d" stroke-width="6.2"/>
<path d="M370,205 Q402,262 362,338 L340,364" stroke="#5c6065" stroke-width="7.2"/>
</g>
</svg><div class="lb" style="width:56px;padding-right:2.5px"><span style="transform:scaleX(0.9)">DX<span class="hy">-</span>9C</span></div></div></div>
<div class="tile" style="left:160px;top:254px"><div class="in"><svg width="106" height="94" viewBox="0 0 106 94" fill="none" stroke="#4f5358" stroke-linecap="round" stroke-linejoin="round">
<g transform="translate(0,25) scale(0.10978)" stroke-width="8.2">
<path d="M70,462 L160,285 L226,398" stroke="#474b50"/>
<path d="M70,462 L212,452 L292,290" stroke="#474b50"/>
<path d="M110,440 L200,432" stroke="#94989d" stroke-width="6.2"/>
<path d="M160,285 L180,300 M226,258 L222,300 L238,372 M226,258 L252,268 L292,290 M252,268 L262,340" stroke="#5c6065" stroke-width="7.2"/>
<path d="M292,290 Q340,250 420,240 L458,240" stroke="#474b50"/>
<path d="M212,452 L240,420 L322,300 Q352,270 412,264" stroke="#474b50"/>
<path d="M250,400 L300,330" stroke="#7b7f84" stroke-width="6.2"/>
<circle cx="356" cy="270" r="6" fill="#5c6065" stroke="none"/>
<path d="M412,250 L440,262 L440,300" stroke="#7b7f84" stroke-width="6.2"/>
<path d="M446,292 L446,420 L490,420 L490,292" stroke="#5c6065" stroke-width="7.2"/>
<path d="M458,375 L478,375 L478,395 L458,395 Z" stroke="#7b7f84" stroke-width="6.2"/>
<path d="M500,292 L500,408 L582,408 M500,322 L585,322 M500,352 L582,352 M500,380 L582,380" stroke="#5c6065" stroke-width="7.2"/>
<path d="M470,128 L602,128 L602,150 L470,150 Z" stroke="#3f4348" stroke-width="9.2"/>
<path d="M478,150 L458,232 L458,282 L520,282" stroke="#3f4348" stroke-width="9.2"/>
<path d="M520,152 L520,246 M602,150 L602,210 Q560,222 520,250 L458,252" stroke="#474b50" stroke-width="7.2"/>
<path d="M562,160 L562,214" stroke="#94989d" stroke-width="9.2"/>
<path d="M520,282 L586,282 Q600,250 650,250 L650,166 L610,166 L610,206" stroke="#5c6065" stroke-width="7.2"/>
<path d="M650,216 L762,216 L852,236 L870,318 L882,330 L882,362 L852,386 L748,402" stroke="#474b50"/>
<path d="M650,250 L700,250 Q742,258 756,300" stroke="#5c6065" stroke-width="7.2"/>
<path d="M762,216 L770,320 L870,322 M750,360 L880,340" stroke="#7b7f84" stroke-width="6.2"/>
<path d="M795,240 L795,305" stroke="#7b7f84" stroke-width="11.2" stroke-dasharray="14 10" stroke-linecap="butt"/>
<path d="M660,196 L700,192" stroke="#94989d" stroke-width="6.2"/>
<path d="M720,212 L720,162 Q722,134 752,130 Q772,132 764,152 L750,162 L750,212" stroke="#474b50"/>
<path d="M284,332 Q300,290 365,286 Q430,290 446,332" stroke="#7b7f84" stroke-width="6.2"/>
<circle cx="365" cy="386" r="78" stroke="#3f4348" stroke-width="10.2" fill="#fff"/>
<circle cx="365" cy="386" r="28" stroke="#474b50" stroke-width="8.2"/>
<circle cx="365" cy="386" r="8" stroke="#5c6065" stroke-width="6.2"/>
<circle cx="665" cy="386" r="78" stroke="#3f4348" stroke-width="10.2" fill="#fff"/>
<circle cx="665" cy="386" r="28" stroke="#474b50" stroke-width="8.2"/>
<circle cx="665" cy="386" r="8" stroke="#5c6065" stroke-width="6.2"/>
</g>
</svg><div class="lb" style="width:56px;padding-right:8px"><span style="transform:scaleX(0.845)">DL</span></div></div></div>
<div class="tile" style="left:283px;top:254px"><div class="in"><svg width="106" height="94" viewBox="0 0 106 94" fill="none" stroke="#4f5358" stroke-linecap="round" stroke-linejoin="round">
<g transform="translate(0,25) scale(0.10978)" stroke-width="8.2">
<path d="M70,462 L160,285 L226,398" stroke="#474b50"/>
<path d="M70,462 L212,452 L292,290" stroke="#474b50"/>
<path d="M110,440 L200,432" stroke="#94989d" stroke-width="6.2"/>
<path d="M160,285 L180,300 M226,258 L222,300 L238,372 M226,258 L252,268 L292,290 M252,268 L262,340" stroke="#5c6065" stroke-width="7.2"/>
<path d="M292,290 Q340,250 420,240 L458,240" stroke="#474b50"/>
<path d="M212,452 L240,420 L322,300 Q352,270 412,264" stroke="#474b50"/>
<path d="M250,400 L300,330" stroke="#7b7f84" stroke-width="6.2"/>
<circle cx="356" cy="270" r="6" fill="#5c6065" stroke="none"/>
<path d="M412,250 L440,262 L440,300" stroke="#7b7f84" stroke-width="6.2"/>
<path d="M446,292 L446,420 L490,420 L490,292" stroke="#5c6065" stroke-width="7.2"/>
<path d="M458,375 L478,375 L478,395 L458,395 Z" stroke="#7b7f84" stroke-width="6.2"/>
<path d="M500,292 L500,408 L582,408 M500,322 L585,322 M500,352 L582,352 M500,380 L582,380" stroke="#5c6065" stroke-width="7.2"/>
<path d="M470,128 L602,128 L602,150 L470,150 Z" stroke="#3f4348" stroke-width="9.2"/>
<path d="M478,150 L458,232 L458,282 L520,282" stroke="#3f4348" stroke-width="9.2"/>
<path d="M520,152 L520,246 M602,150 L602,210 Q560,222 520,250 L458,252" stroke="#474b50" stroke-width="7.2"/>
<path d="M562,160 L562,214" stroke="#94989d" stroke-width="9.2"/>
<path d="M520,282 L586,282 Q600,250 650,250 L650,166 L610,166 L610,206" stroke="#5c6065" stroke-width="7.2"/>
<path d="M650,216 L762,216 L852,236 L870,318 L882,330 L882,362 L852,386 L748,402" stroke="#474b50"/>
<path d="M650,250 L700,250 Q742,258 756,300" stroke="#5c6065" stroke-width="7.2"/>
<path d="M762,216 L770,320 L870,322 M750,360 L880,340" stroke="#7b7f84" stroke-width="6.2"/>
<path d="M795,240 L795,305" stroke="#7b7f84" stroke-width="11.2" stroke-dasharray="14 10" stroke-linecap="butt"/>
<path d="M660,196 L700,192" stroke="#94989d" stroke-width="6.2"/>
<path d="M720,212 L720,162 Q722,134 752,130 Q772,132 764,152 L750,162 L750,212" stroke="#474b50"/>
<path d="M284,332 Q300,290 365,286 Q430,290 446,332" stroke="#7b7f84" stroke-width="6.2"/>
<circle cx="365" cy="386" r="78" stroke="#3f4348" stroke-width="10.2" fill="#fff"/>
<circle cx="365" cy="386" r="28" stroke="#474b50" stroke-width="8.2"/>
<circle cx="365" cy="386" r="8" stroke="#5c6065" stroke-width="6.2"/>
<circle cx="665" cy="386" r="78" stroke="#3f4348" stroke-width="10.2" fill="#fff"/>
<circle cx="665" cy="386" r="28" stroke="#474b50" stroke-width="8.2"/>
<circle cx="665" cy="386" r="8" stroke="#5c6065" stroke-width="6.2"/>
</g>
</svg><div class="lb" style="width:56px;padding-right:8px"><span style="transform:scaleX(0.913)">DL<span class="hy">-</span>3</span></div></div></div>
<div class="tile" style="left:403px;top:254px"><div class="in"><svg width="106" height="94" viewBox="0 0 106 94" fill="none" stroke="#4f5358" stroke-linecap="round" stroke-linejoin="round">
<g transform="translate(0,25) scale(0.10978)" stroke-width="8.2">
<path d="M70,462 L160,285 L226,398" stroke="#474b50"/>
<path d="M70,462 L212,452 L292,290" stroke="#474b50"/>
<path d="M110,440 L200,432" stroke="#94989d" stroke-width="6.2"/>
<path d="M160,285 L180,300 M226,258 L222,300 L238,372 M226,258 L252,268 L292,290 M252,268 L262,340" stroke="#5c6065" stroke-width="7.2"/>
<path d="M292,290 Q340,250 420,240 L458,240" stroke="#474b50"/>
<path d="M212,452 L240,420 L322,300 Q352,270 412,264" stroke="#474b50"/>
<path d="M250,400 L300,330" stroke="#7b7f84" stroke-width="6.2"/>
<circle cx="356" cy="270" r="6" fill="#5c6065" stroke="none"/>
<path d="M412,250 L440,262 L440,300" stroke="#7b7f84" stroke-width="6.2"/>
<path d="M446,292 L446,420 L490,420 L490,292" stroke="#5c6065" stroke-width="7.2"/>
<path d="M458,375 L478,375 L478,395 L458,395 Z" stroke="#7b7f84" stroke-width="6.2"/>
<path d="M500,292 L500,408 L582,408 M500,322 L585,322 M500,352 L582,352 M500,380 L582,380" stroke="#5c6065" stroke-width="7.2"/>
<path d="M470,128 L602,128 L602,150 L470,150 Z" stroke="#3f4348" stroke-width="9.2"/>
<path d="M478,150 L458,232 L458,282 L520,282" stroke="#3f4348" stroke-width="9.2"/>
<path d="M520,152 L520,246 M602,150 L602,210 Q560,222 520,250 L458,252" stroke="#474b50" stroke-width="7.2"/>
<path d="M562,160 L562,214" stroke="#94989d" stroke-width="9.2"/>
<path d="M520,282 L586,282 Q600,250 650,250 L650,166 L610,166 L610,206" stroke="#5c6065" stroke-width="7.2"/>
<path d="M650,216 L762,216 L852,236 L870,318 L882,330 L882,362 L852,386 L748,402" stroke="#474b50"/>
<path d="M650,250 L700,250 Q742,258 756,300" stroke="#5c6065" stroke-width="7.2"/>
<path d="M762,216 L770,320 L870,322 M750,360 L880,340" stroke="#7b7f84" stroke-width="6.2"/>
<path d="M795,240 L795,305" stroke="#7b7f84" stroke-width="11.2" stroke-dasharray="14 10" stroke-linecap="butt"/>
<path d="M660,196 L700,192" stroke="#94989d" stroke-width="6.2"/>
<path d="M720,212 L720,162 Q722,134 752,130 Q772,132 764,152 L750,162 L750,212" stroke="#474b50"/>
<path d="M284,332 Q300,290 365,286 Q430,290 446,332" stroke="#7b7f84" stroke-width="6.2"/>
<circle cx="365" cy="386" r="78" stroke="#3f4348" stroke-width="10.2" fill="#fff"/>
<circle cx="365" cy="386" r="28" stroke="#474b50" stroke-width="8.2"/>
<circle cx="365" cy="386" r="8" stroke="#5c6065" stroke-width="6.2"/>
<circle cx="665" cy="386" r="78" stroke="#3f4348" stroke-width="10.2" fill="#fff"/>
<circle cx="665" cy="386" r="28" stroke="#474b50" stroke-width="8.2"/>
<circle cx="665" cy="386" r="8" stroke="#5c6065" stroke-width="6.2"/>
</g>
</svg><div class="lb" style="width:56px;padding-right:8px"><span style="transform:scaleX(0.913)">DL<span class="hy">-</span>5</span></div></div></div>
<div class="tile dk" style="left:160px;top:379px"><div class="in"><svg width="106" height="94" viewBox="0 0 106 94" fill="none" stroke="#4f5358" stroke-linecap="round" stroke-linejoin="round">
<g transform="translate(0,25) scale(0.10978)" stroke-width="8.2">
<path d="M316,166 L316,102 L374,102 L374,166" stroke="#474b50"/>
<path d="M326,130 L366,130" stroke="#94989d" stroke-width="6.2"/>
<path d="M420,166 L420,120 L495,120 L495,142 L446,142 L446,166" stroke="#474b50"/>
<path d="M545,166 L545,100 L630,100 L630,142 L586,142 L586,166" stroke="#474b50"/>
<path d="M290,170 L650,170 L650,222 L290,222 Z" stroke="#3f4348" stroke-width="9.2"/>
<path d="M266,226 L650,226 L650,400 L620,400 L590,440 L590,486 L366,486 L366,440 L340,410 L266,410 Z" stroke="#3f4348" stroke-width="9.2"/>
<path d="M266,370 L650,370 M266,386 L650,386" stroke="#7b7f84" stroke-width="6.2"/>
<rect x="318" y="186" width="26" height="60" rx="12" fill="#fff" stroke="#3f4348" stroke-width="8.2"/>
<rect x="370" y="186" width="26" height="60" rx="12" fill="#fff" stroke="#3f4348" stroke-width="8.2"/>
<rect x="421" y="186" width="26" height="60" rx="12" fill="#fff" stroke="#3f4348" stroke-width="8.2"/>
<rect x="473" y="186" width="26" height="60" rx="12" fill="#fff" stroke="#3f4348" stroke-width="8.2"/>
<rect x="524" y="186" width="26" height="60" rx="12" fill="#fff" stroke="#3f4348" stroke-width="8.2"/>
<path d="M605,165 L640,200 L605,235 L570,200 Z" fill="#fff" stroke="#3f4348" stroke-width="9.2"/>
<path d="M590,185 L622,217" stroke="#7b7f84" stroke-width="6.2"/>
<path d="M266,242 L228,242 L228,396 L266,396" stroke="#474b50"/>
<path d="M228,300 L262,300 M228,340 L262,340 M246,300 L246,340" stroke="#7b7f84" stroke-width="6.2"/>
<path d="M290,292 Q290,276 306,276 L340,276 Q356,276 356,292 L356,366 L320,366 L320,346 L290,346 Z" stroke="#474b50"/>
<path d="M386,266 L490,266 L490,346 L386,346 Z" stroke="#3f4348" stroke-width="9.2"/>
<path d="M400,356 L476,356" stroke="#94989d" stroke-width="6.2"/>
<circle cx="413" cy="291" r="7" fill="#474b50" stroke="none"/><circle cx="463" cy="291" r="7" fill="#474b50" stroke="none"/>
<circle cx="413" cy="323" r="7" fill="#474b50" stroke="none"/><circle cx="463" cy="323" r="7" fill="#474b50" stroke="none"/>
<circle cx="546" cy="314" r="19" stroke="#5c6065" stroke-width="7.2"/>
<circle cx="546" cy="314" r="5" fill="#7b7f84" stroke="none"/>
<path d="M535,332 L535,410" stroke="#474b50" stroke-width="7.2"/>
<ellipse cx="535" cy="442" rx="18" ry="34" stroke="#474b50" fill="#fff"/>
<path d="M380,402 L380,436 M396,402 L396,440 M412,402 L412,440 M428,402 L428,440 M444,402 L444,440 M468,402 L468,440" stroke="#7b7f84" stroke-width="6.2"/>
<circle cx="432" cy="462" r="4" fill="#5c6065" stroke="none"/><circle cx="574" cy="462" r="4" fill="#7b7f84" stroke="none"/>
<path d="M612,250 L640,250 L640,350 L612,350" stroke="#94989d" stroke-width="6.2"/>
<path d="M626,262 L626,300" stroke="#7b7f84" stroke-width="10.2" stroke-dasharray="8 6" stroke-linecap="butt"/>
<circle cx="628" cy="338" r="5" fill="#5c6065" stroke="none"/>
<path d="M656,242 L686,242 L686,396 L656,396" stroke="#474b50"/>
<path d="M664,300 L692,300 L692,336 L664,336 Z" stroke="#5c6065" stroke-width="7.2"/>
<path d="M708,216 L738,202 M708,248 L738,234 M708,280 L738,266 M708,312 L738,298 M708,344 L738,330 M708,376 L738,362 M708,408 L738,394 M708,436 L738,422" stroke="#3f4348" stroke-width="10.2"/>
<path d="M746,290 Q776,290 776,315 Q776,340 746,340" stroke="#5c6065" stroke-width="7.2"/>
</g>
</svg><div class="lb" style="width:56px;padding-right:8px"><span style="transform:scaleX(0.99)">Tier3</span></div></div></div>
<div class="tile dk" style="left:283px;top:379px"><div class="in"><svg width="106" height="94" viewBox="0 0 106 94" fill="none" stroke="#4f5358" stroke-linecap="round" stroke-linejoin="round">
<g transform="translate(0,25) scale(0.10978)" stroke-width="8.2">
<path d="M316,166 L316,102 L374,102 L374,166" stroke="#474b50"/>
<path d="M326,130 L366,130" stroke="#94989d" stroke-width="6.2"/>
<path d="M420,166 L420,120 L495,120 L495,142 L446,142 L446,166" stroke="#474b50"/>
<path d="M545,166 L545,100 L630,100 L630,142 L586,142 L586,166" stroke="#474b50"/>
<path d="M290,170 L650,170 L650,222 L290,222 Z" stroke="#3f4348" stroke-width="9.2"/>
<path d="M266,226 L650,226 L650,400 L620,400 L590,440 L590,486 L366,486 L366,440 L340,410 L266,410 Z" stroke="#3f4348" stroke-width="9.2"/>
<path d="M266,370 L650,370 M266,386 L650,386" stroke="#7b7f84" stroke-width="6.2"/>
<rect x="318" y="186" width="26" height="60" rx="12" fill="#fff" stroke="#3f4348" stroke-width="8.2"/>
<rect x="370" y="186" width="26" height="60" rx="12" fill="#fff" stroke="#3f4348" stroke-width="8.2"/>
<rect x="421" y="186" width="26" height="60" rx="12" fill="#fff" stroke="#3f4348" stroke-width="8.2"/>
<rect x="473" y="186" width="26" height="60" rx="12" fill="#fff" stroke="#3f4348" stroke-width="8.2"/>
<rect x="524" y="186" width="26" height="60" rx="12" fill="#fff" stroke="#3f4348" stroke-width="8.2"/>
<path d="M605,165 L640,200 L605,235 L570,200 Z" fill="#fff" stroke="#3f4348" stroke-width="9.2"/>
<path d="M590,185 L622,217" stroke="#7b7f84" stroke-width="6.2"/>
<path d="M266,242 L228,242 L228,396 L266,396" stroke="#474b50"/>
<path d="M228,300 L262,300 M228,340 L262,340 M246,300 L246,340" stroke="#7b7f84" stroke-width="6.2"/>
<path d="M290,292 Q290,276 306,276 L340,276 Q356,276 356,292 L356,366 L320,366 L320,346 L290,346 Z" stroke="#474b50"/>
<path d="M386,266 L490,266 L490,346 L386,346 Z" stroke="#3f4348" stroke-width="9.2"/>
<path d="M400,356 L476,356" stroke="#94989d" stroke-width="6.2"/>
<circle cx="413" cy="291" r="7" fill="#474b50" stroke="none"/><circle cx="463" cy="291" r="7" fill="#474b50" stroke="none"/>
<circle cx="413" cy="323" r="7" fill="#474b50" stroke="none"/><circle cx="463" cy="323" r="7" fill="#474b50" stroke="none"/>
<circle cx="546" cy="314" r="19" stroke="#5c6065" stroke-width="7.2"/>
<circle cx="546" cy="314" r="5" fill="#7b7f84" stroke="none"/>
<path d="M535,332 L535,410" stroke="#474b50" stroke-width="7.2"/>
<ellipse cx="535" cy="442" rx="18" ry="34" stroke="#474b50" fill="#fff"/>
<path d="M380,402 L380,436 M396,402 L396,440 M412,402 L412,440 M428,402 L428,440 M444,402 L444,440 M468,402 L468,440" stroke="#7b7f84" stroke-width="6.2"/>
<circle cx="432" cy="462" r="4" fill="#5c6065" stroke="none"/><circle cx="574" cy="462" r="4" fill="#7b7f84" stroke="none"/>
<path d="M612,250 L640,250 L640,350 L612,350" stroke="#94989d" stroke-width="6.2"/>
<path d="M626,262 L626,300" stroke="#7b7f84" stroke-width="10.2" stroke-dasharray="8 6" stroke-linecap="butt"/>
<circle cx="628" cy="338" r="5" fill="#5c6065" stroke="none"/>
<path d="M656,242 L686,242 L686,396 L656,396" stroke="#474b50"/>
<path d="M664,300 L692,300 L692,336 L664,336 Z" stroke="#5c6065" stroke-width="7.2"/>
<path d="M708,216 L738,202 M708,248 L738,234 M708,280 L738,266 M708,312 L738,298 M708,344 L738,330 M708,376 L738,362 M708,408 L738,394 M708,436 L738,422" stroke="#3f4348" stroke-width="10.2"/>
<path d="M746,290 Q776,290 776,315 Q776,340 746,340" stroke="#5c6065" stroke-width="7.2"/>
</g>
</svg><div class="lb" style="width:56px;padding-right:8px"><span style="transform:scaleX(1)">Tier4</span></div></div></div>
<div class="tile" style="left:403px;top:379px"><div class="in"><svg width="106" height="94" viewBox="0 0 106 94" fill="none" stroke="#45484d" stroke-linecap="square" stroke-linejoin="miter">
<g stroke-width="0.9">
<rect x="34.5" y="37.5" width="38" height="38"/>
<path d="M34.5,46.5 L72.5,46.5"/>
<rect x="37.5" y="39.8" width="3" height="4.2"/>
<rect x="43.5" y="39.8" width="3" height="4.2"/>
<path d="M36.5,73 L36.5,46.5 M70.5,46.5 L70.5,73" stroke="#6a6e73" stroke-width="0.7"/>
<path d="M53.5,50.8 L62.6,62.3 L57.8,62.3 L57.8,75.5 L49.4,75.5 L49.4,62.3 L44.5,62.3 Z" stroke-linejoin="round"/>
<path d="M37,74.3 L45.5,74.3 M61.5,74.3 L70.5,74.3" stroke="#55595e" stroke-width="1.8"/>
</g>
</svg><div class="lb" style="width:67px;padding-right:8px"><span style="transform:scaleX(0.964)">Update</span></div></div></div>
<div class="tile sel" style="left:399px;top:125px"><div class="in"><svg width="106" height="94" viewBox="0 0 106 94" fill="none" stroke="#4f5358" stroke-linecap="round" stroke-linejoin="round">
<g transform="translate(0,25) scale(0.10978)" stroke-width="8.2">
<rect x="420" y="385" width="430" height="105" rx="52" stroke="#3f4348" stroke-width="9.2"/>
<rect x="434" y="398" width="402" height="79" rx="39" stroke="#7b7f84" stroke-width="6.2"/>
<rect x="458" y="418" width="356" height="42" rx="12" stroke="#3f4348" stroke-width="8.2"/>
<path d="M478,422 L478,456 M800,430 L800,450" stroke="#5c6065" stroke-width="7.2"/>
<path d="M578,364 L578,400 M602,364 L602,400 M668,364 L668,400 M690,364 L690,400" stroke-width="7.2"/>
<path d="M576,400 L604,400 L604,414 L576,414 Z M666,400 L692,400 L692,414 L666,414 Z" fill="#4f5358" stroke="none"/>
<path d="M662,280 L866,280 Q880,282 880,298 L880,346 L520,346" stroke="#474b50"/>
<path d="M520,362 L868,362 L880,346" stroke="#474b50" stroke-width="9.2"/>
<path d="M680,300 L860,300 M680,318 L800,318" stroke="#9da1a6" stroke-width="7.2"/>
<path d="M808,312 L852,312 L852,326 L808,326 Z" fill="#7f8388" stroke="none"/>
<path d="M722,279 L736,242 L814,242 L828,279" stroke="#474b50"/>
<path d="M520,362 L520,300 L545,214 L600,191 L648,191 L662,280 L662,362" stroke="#3f4348" stroke-width="9.2"/>
<path d="M547,216 L606,216 L606,276 M612,216 L646,216 M528,292 L640,292" stroke="#696d72" stroke-width="6.2"/>
<path d="M538,342 Q590,302 660,282" stroke="#696d72" stroke-width="6.2"/>
<path d="M80,130 L270,100 L380,92 L465,108 Q525,135 560,188" />
<path d="M100,146 L282,116 L388,108" stroke="#7b7f84" stroke-width="6.2"/>
<path d="M255,104 L275,92 L375,84 L385,92" stroke="#7b7f84" stroke-width="6.2"/>
<path d="M150,190 L300,170 Q420,148 470,180 L516,238" />
<path d="M215,182 L330,160 Q420,148 462,176" stroke="#94989d" stroke-width="5.2"/>
<path d="M462,128 Q474,108 490,122 L540,196 Q530,214 512,204 Z" stroke="#474b50" stroke-width="7.2"/>
<path d="M500,206 L520,246 L540,214" stroke="#5c6065" stroke-width="7.2"/>
<path d="M80,130 Q62,160 92,188 L318,396" stroke="#474b50"/>
<path d="M150,190 L346,362" stroke="#474b50"/>
<path d="M118,182 L330,384" stroke="#7b7f84" stroke-width="6.2"/>
<circle cx="156" cy="190" r="9" stroke-width="6.2"/>
<path d="M320,362 L350,356 L346,392 L322,398 Z" fill="#5c6065" stroke="#3f4348" stroke-width="6.2"/>
<path d="M370,205 Q482,268 466,332 Q450,378 342,396" stroke="#5c6065" stroke-width="7.2"/>
<path d="M384,232 Q452,282 440,330 Q424,366 350,384" stroke="#94989d" stroke-width="6.2"/>
<path d="M370,205 Q402,262 362,338 L340,364" stroke="#5c6065" stroke-width="7.2"/>
</g>
</svg><div class="lb" style="padding-right:8.5px"><span style="transform:scaleX(.912)">DX<span class="hy">-</span>3</span></div></div></div>
<div id="panel"><div id="panelhd"></div></div>
<div class="abs" style="left:558px;top:288px;font-size:12.25px;line-height:14px;color:#e9eaf1">Serial Port Settings</div>
<div class="plabel" style="top:323px">Port Name:</div>
<div class="plabel" style="top:355px">Baud Rate:</div>
<div class="plabel" style="top:387px">Data Bits:</div>
<div class="plabel" style="top:421px">Parity:</div>
<div class="plabel" style="top:455px">Stop Bits:</div>
<div class="combo on" style="top:318px">COM1<b></b><i></i></div>
<div class="combo" style="top:352px">115200<i></i></div>
<div class="combo" style="top:384px">8<i></i></div>
<div class="combo" style="top:418px">None<i></i></div>
<div class="combo" style="top:452px">One<i></i></div>
<div id="ok">OK</div>
</body>
</html>
